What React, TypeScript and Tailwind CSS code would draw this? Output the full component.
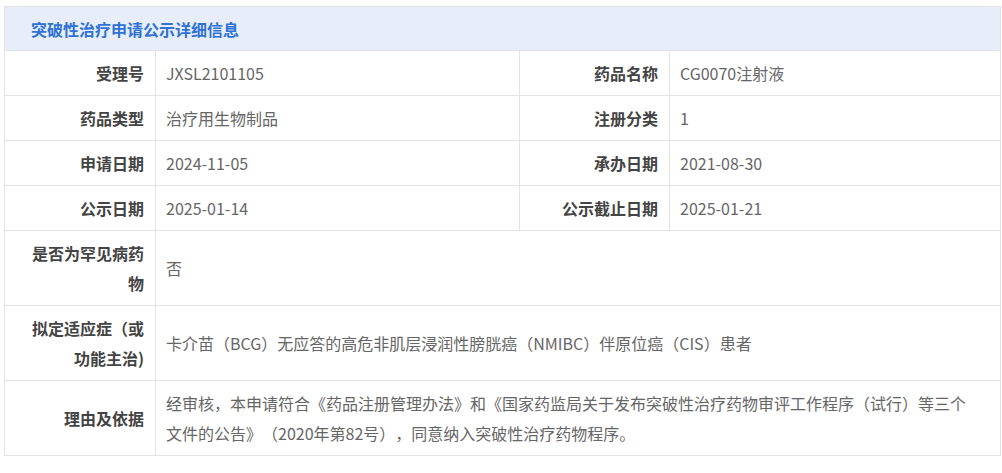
const font = "font-['Microsoft_YaHei','Noto_Sans_CJK_SC',sans-serif]";

type Pair = [string, string];

const pairs: [Pair, Pair][] = [
  [["受理号", "JXSL2101105"], ["药品名称", "CG0070注射液"]],
  [["药品类型", "治疗用生物制品"], ["注册分类", "1"]],
  [["申请日期", "2024-11-05"], ["承办日期", "2021-08-30"]],
  [["公示日期", "2025-01-14"], ["公示截止日期", "2025-01-21"]],
];

const wide: Pair[] = [
  ["是否为罕见病药物", "否"],
  ["拟定适应症（或功能主治)", "卡介苗（BCG）无应答的高危非肌层浸润性膀胱癌（NMIBC）伴原位癌（CIS）患者"],
  [
    "理由及依据",
    "经审核，本申请符合《药品注册管理办法》和《国家药监局关于发布突破性治疗药物审评工作程序（试行）等三个文件的公告》（2020年第82号），同意纳入突破性治疗药物程序。",
  ],
];

function Label({ children }: { children: React.ReactNode }) {
  return (
    <div className="flex items-center justify-end border-r border-b border-[#e3e3e3] py-[7px] pr-[11px] pl-[14px] text-right text-[16px] leading-[30px] font-bold text-[#444]">
      <span>{children}</span>
    </div>
  );
}

function Value({ children, wide }: { children: React.ReactNode; wide?: boolean }) {
  return (
    <div
      className={
        "flex items-center border-r border-b border-[#e3e3e3] py-[7px] pl-[10px] text-[16px] leading-[30px] text-[#666] " +
        (wide ? "col-span-3 pr-[24px]" : "pr-[10px]")
      }
    >
      <span>{children}</span>
    </div>
  );
}

export default function App() {
  return (
    <div className={`min-h-screen bg-white pt-[6px] pl-[4px] [text-spacing-trim:space-all] ${font}`}>
      <div className="grid w-[997px] grid-cols-[151px_364px_150px_1fr] border-t border-l border-[#e3e3e3]">
        <div className="col-span-4 flex h-[44px] items-center border-r border-b border-[#e3e3e3] bg-[#e7eef9] pl-[26px] text-[16px] font-bold text-[#2f72d6]">
          突破性治疗申请公示详细信息
        </div>
        {pairs.map(([a, b], i) => (
          <div key={i} className="contents">
            <Label>{a[0]}</Label>
            <Value>{a[1]}</Value>
            <Label>{b[0]}</Label>
            <Value>{b[1]}</Value>
          </div>
        ))}
        {wide.map(([k, v], i) => (
          <div key={i} className="contents">
            <Label>{k}</Label>
            <Value wide>{v}</Value>
          </div>
        ))}
      </div>
    </div>
  );
}
